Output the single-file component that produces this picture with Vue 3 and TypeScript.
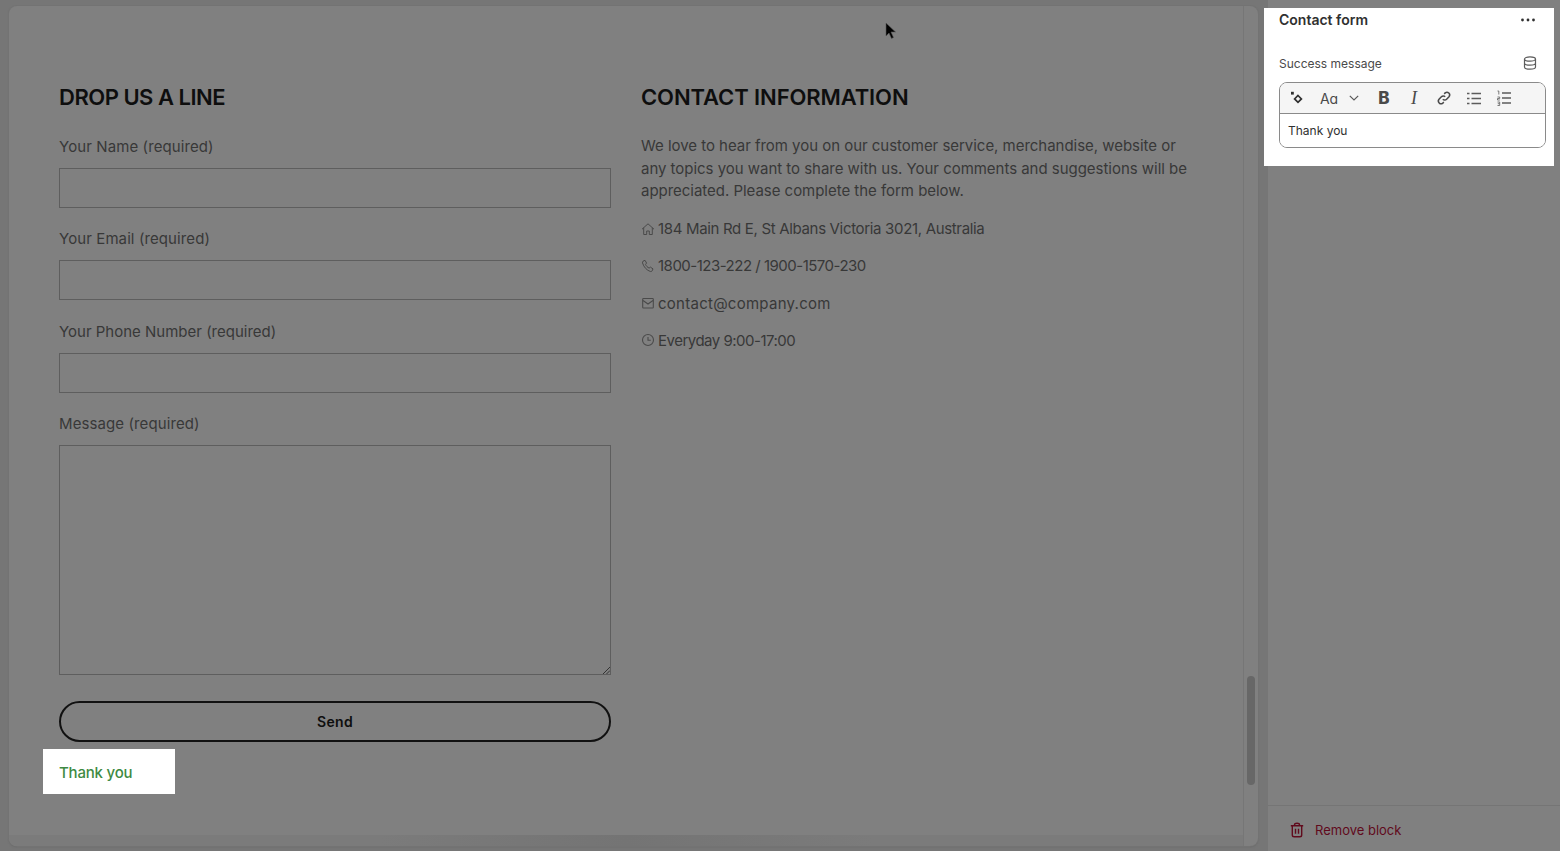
<script setup lang="ts">
const fields = [
  { label: 'Your Name (required)', narrow: false },
  { label: 'Your Email (required)', narrow: false },
  { label: 'Your Phone Number (required)', narrow: true },
]
</script>

<template>
  <div class="page">
    <main class="canvas">
      <div class="viewport">
        <div class="columns">
          <section class="col">
            <h2 class="title tight">DROP US A LINE</h2>
            <div v-for="f in fields" :key="f.label" class="field">
              <label class="label" :class="{ narrow: f.narrow }">{{ f.label }}</label>
              <div class="input"></div>
            </div>
            <div class="field">
              <label class="label">Message (required)</label>
              <div class="textarea">
                <svg class="grip" width="8" height="8" viewBox="0 0 8 8"><path d="M1 8L8 1M4.500 8L8 4.500" stroke="#333" stroke-width="1" fill="none"/></svg>
              </div>
            </div>
            <button class="send">Send</button>
            <div class="success">Thank you</div>
          </section>
          <section class="col">
            <h2 class="title loose">CONTACT INFORMATION</h2>
            <p class="intro">We love to hear from you on our customer service, merchandise, website or any topics you want to share with us. Your comments and suggestions will be appreciated. Please complete the form below.</p>
            <div class="info ls-addr">
              <svg width="14" height="14" viewBox="0 0 14 14" fill="none" stroke="#4a4a4a" stroke-width="1"><path d="M1 7.200L7 1.800l6 5.400M2.700 5.800V12.500h3V9h2.600v3.500h3V5.800"/></svg>
              <span>184 Main Rd E, St Albans Victoria 3021, Australia</span>
            </div>
            <div class="info ls-num">
              <svg width="14" height="14" viewBox="0 0 14 14" fill="none" stroke="#4a4a4a" stroke-width="1"><path d="M2 2.200l2-.9 1.600 2.800-1.100 1.200c.6 1.600 2 3.100 3.600 3.800l1.300-1 2.600 1.800-.9 2c-.4.6-1 .8-1.700.6C5.800 11.300 2.800 8.200 1.500 3.900c-.1-.7.100-1.300.5-1.700z"/></svg>
              <span>1800-123-222 / 1900-1570-230</span>
            </div>
            <div class="info ls-mail">
              <svg width="14" height="14" viewBox="0 0 14 14" fill="none" stroke="#4a4a4a" stroke-width="1.100"><rect x="1.700" y="2.500" width="10.600" height="9.500" rx=".8"/><path d="M2 4.500l5 3.500 5-3.500"/></svg>
              <span>contact@company.com</span>
            </div>
            <div class="info ls-num">
              <svg width="14" height="14" viewBox="0 0 14 14" fill="none" stroke="#4a4a4a" stroke-width="1.100"><circle cx="7" cy="7" r="5.500"/><path d="M7 4v3.300h2.800"/></svg>
              <span>Everyday 9:00-17:00</span>
            </div>
          </section>
        </div>
        <div class="hbar"></div>
      </div>
      <div class="track"><div class="thumb"></div></div>
    </main>

    <aside class="panel">
      <div class="card">
        <div class="card-head">
          <strong>Contact form</strong>
          <svg width="16" height="4" viewBox="0 0 16 4" fill="#303030"><circle cx="2.500" cy="2" r="1.400"/><circle cx="8" cy="2" r="1.400"/><circle cx="13.500" cy="2" r="1.400"/></svg>
        </div>
        <div class="msg-row">
          <span>Success message</span>
          <svg width="16" height="16" viewBox="0 0 16 16" fill="none" stroke="#5c5c5c" stroke-width="1.200"><ellipse cx="8" cy="4" rx="5.500" ry="2.200"/><path d="M2.500 4v8c0 1.200 2.500 2.200 5.500 2.200s5.500-1 5.500-2.200V4M2.500 8c0 1.200 2.500 2.200 5.500 2.200s5.500-1 5.500-2.200"/></svg>
        </div>
        <div class="editor">
          <div class="toolbar">
            <span class="tool"><svg width="14" height="14" viewBox="0 0 14 14" fill="none" stroke="#303030"><path d="M8 4.500l3.400 3.400L8 11.300 4.600 7.900z" stroke-width="1.700"/><rect x="1" y=".8" width="2.800" height="2.800" fill="#303030" stroke="none"/></svg></span>
            <span class="aa">Aɑ</span>
            <span class="chev"><svg width="10" height="6" viewBox="0 0 10 6" fill="none" stroke="#5c5c5c" stroke-width="1.200"><path d="M.8 .8L5 5l4.200-4.200"/></svg></span>
            <span class="tool b">B</span>
            <span class="tool i">I</span>
            <span class="tool"><svg width="16" height="16" viewBox="0 0 16 16" fill="none" stroke="#4a4a4a" stroke-width="1.500"><path d="M6.800 9.200a2.600 2.600 0 0 0 3.800 0l2.400-2.500a2.700 2.700 0 0 0-3.800-3.800l-1 1"/><path d="M9.200 6.800a2.600 2.600 0 0 0-3.800 0L3 9.300a2.700 2.700 0 0 0 3.800 3.800l1-1"/></svg></span>
            <span class="tool"><svg width="16" height="15" viewBox="0 0 16 15" fill="none" stroke="#5c5c5c" stroke-width="1.300"><path d="M5.500 2.500H15M5.500 7.500H15M5.500 12.500H15M1 2.500h2.500M1 7.500h2.500M1 12.500h2.500"/></svg></span>
            <span class="tool"><svg width="16" height="16" viewBox="0 0 16 16" fill="none" stroke="#5c5c5c" stroke-width="1.300"><path d="M6 3H15M6 8H15M6 13H15"/><path d="M1.500 1h1.300v3.500M1.500 7h2.200v1.500H1.500V10h2.300M1.500 12h2.200v3.500H1.500M1.800 13.700h1.800" stroke-width=".8"/></svg></span>
          </div>
          <div class="text">Thank you</div>
        </div>
      </div>
      <div class="spacer"></div>
      <div class="remove">
        <svg width="16" height="16" viewBox="0 0 16 16" fill="none" stroke="#600a1c" stroke-width="1.400"><path d="M1.800 3.700h12.400M5.500 3.500V2.800C5.500 1.800 6.300 1.200 8 1.200s2.500.6 2.500 1.600v.7M3.300 3.800V13a1.800 1.800 0 0 0 1.800 1.800h5.800a1.800 1.800 0 0 0 1.800-1.800V3.800M6.500 6.800v5M9.500 6.800v5"/></svg>
        <span>Remove block</span>
      </div>
    </aside>

    <svg class="cursor" width="12" height="18" viewBox="0 0 12 18"><path d="M1 1v13l3-3 2.500 5.500 2-1L6 10h4.500z" fill="#000" stroke="#555" stroke-width=".6"/></svg>
  </div>
</template>

<style>
html, body { margin: 0; height: 100%; background: #767676; overflow: hidden; }
</style>

<style scoped>
.page {
  width: 1560px;
  height: 851px;
  display: flex;
  background: #767676;
  position: relative;
  overflow: hidden;
}
.canvas {
  width: 1249px;
  height: 840px;
  margin: 6px 0 0 9px;
  display: flex;
  background: #808080;
  border-radius: 8px;
  box-shadow: 0 0 0 1px #737373, 0 1px 2px #666;
  overflow: hidden;
  flex: none;
}
.viewport {
  flex: 1;
  display: flex;
  flex-direction: column;
  min-width: 0;
  border-right: 1px solid #767676;
}
.columns {
  flex: 1;
  display: flex;
  gap: 30px;
  padding: 0 50px;
  min-height: 0;
}
.hbar {
  height: 11px;
  flex: none;
  background: linear-gradient(90deg, #7b7b7b 30%, #747474 50%, #7b7b7b 70%);
}
.col {
  width: 552px;
  flex: none;
  padding-top: 76px;
  font-family: Inter, "Noto Sans", sans-serif;
  color: #383838;
}
.title {
  margin: 0 0 23px;
  height: 30px;
  font-size: 22px;
  line-height: 30px;
  font-weight: 600;
  color: #0e0e0e;
}
.tight { letter-spacing: -.5px; }
.loose { letter-spacing: -.1px; }
.label {
  display: block;
  height: 32.700px;
  font-size: 15px;
  line-height: 24px;
  letter-spacing: .1px;
  color: #383838;
}
.label.narrow { letter-spacing: 0; }
.input {
  height: 38px;
  border: 1px solid #5e5e5e;
  margin-bottom: 19.800px;
}
.textarea {
  height: 228px;
  border: 1px solid #5e5e5e;
  position: relative;
}
.grip { position: absolute; right: 0; bottom: 0; }
.send {
  display: block;
  width: 100%;
  height: 41px;
  margin-top: 26px;
  border: 2px solid #111;
  border-radius: 21px;
  background: transparent;
  color: #0e0e0e;
  font: 600 14px/1 Inter, sans-serif;
  letter-spacing: .3px;
}
.success {
  width: 132px;
  height: 45px;
  margin: 7px 0 0 -16px;
  padding-left: 16px;
  box-sizing: border-box;
  background: #fff;
  color: #3d8a42;
  font-size: 15px;
  font-weight: 500;
  line-height: 47px;
  letter-spacing: -.2px;
}
.intro {
  margin: 0 0 15px;
  font-size: 15px;
  line-height: 22.500px;
  letter-spacing: -.03px;
  color: #383838;
}
.info {
  display: flex;
  align-items: center;
  gap: 3px;
  height: 22px;
  margin-bottom: 15.300px;
  font-size: 15px;
  color: #383838;
}
.ls-addr { letter-spacing: -.33px; }
.ls-num { letter-spacing: -.5px; }
.ls-mail { letter-spacing: .26px; }
.track { width: 14px; flex: none; }
.thumb {
  width: 8px;
  height: 109px;
  margin: 670px 0 0 3px;
  background: #676767;
  border-radius: 4px;
}
.panel {
  flex: none;
  width: 292px;
  margin-left: 10px;
  height: 851px;
  background: #808080;
  display: flex;
  flex-direction: column;
  font-family: Inter, sans-serif;
}
.card {
  margin: 8px 6px 0 -4px;
  height: 158px;
  padding: 0 8px 0 15px;
  background: #fff;
  box-sizing: border-box;
  flex: none;
}
.card-head {
  height: 23px;
  display: flex;
  justify-content: space-between;
  align-items: center;
  font-size: 14px;
  color: #303030;
}
.card-head strong { font-weight: 600; }
.card-head svg { margin-right: 10px; }
.msg-row {
  margin-top: 20px;
  height: 24px;
  display: flex;
  justify-content: space-between;
  align-items: center;
  font-size: 12px;
  color: #4a4a4a;
}
.msg-row svg { margin-right: 8px; }
.editor {
  margin-top: 7px;
  border: 1px solid #8a8a8a;
  border-radius: 8px;
  overflow: hidden;
}
.toolbar {
  height: 30px;
  box-sizing: content-box;
  padding-left: 2px;
  background: #f5f5f5;
  border-bottom: 1px solid #8a8a8a;
  display: flex;
  align-items: center;
}
.tool {
  width: 30px;
  height: 30px;
  flex: none;
  display: flex;
  align-items: center;
  justify-content: center;
}
.aa {
  width: 34px;
  flex: none;
  text-align: center;
  font-size: 14px;
  color: #4a4a4a;
}
.chev {
  width: 16px;
  margin-right: 7px;
  flex: none;
  display: flex;
  justify-content: center;
}
.b { font: 800 17px/1 Inter, sans-serif; color: #4a4a4a; }
.i { font: italic 400 18px/1 "Liberation Serif", serif; color: #4a4a4a; }
.text {
  height: 33px;
  padding-left: 8px;
  font-size: 12px;
  line-height: 33px;
  color: #303030;
  background: #fff;
}
.spacer { flex: 1; }
.remove {
  height: 46px;
  padding-top: 3px;
  box-sizing: border-box;
  border-top: 1px solid #757575;
  display: flex;
  align-items: center;
  gap: 10px;
  padding-left: 21px;
  font-size: 13px;
  color: #600a1c;
  flex: none;
}
.cursor { position: absolute; left: 885px; top: 22px; }
</style>
